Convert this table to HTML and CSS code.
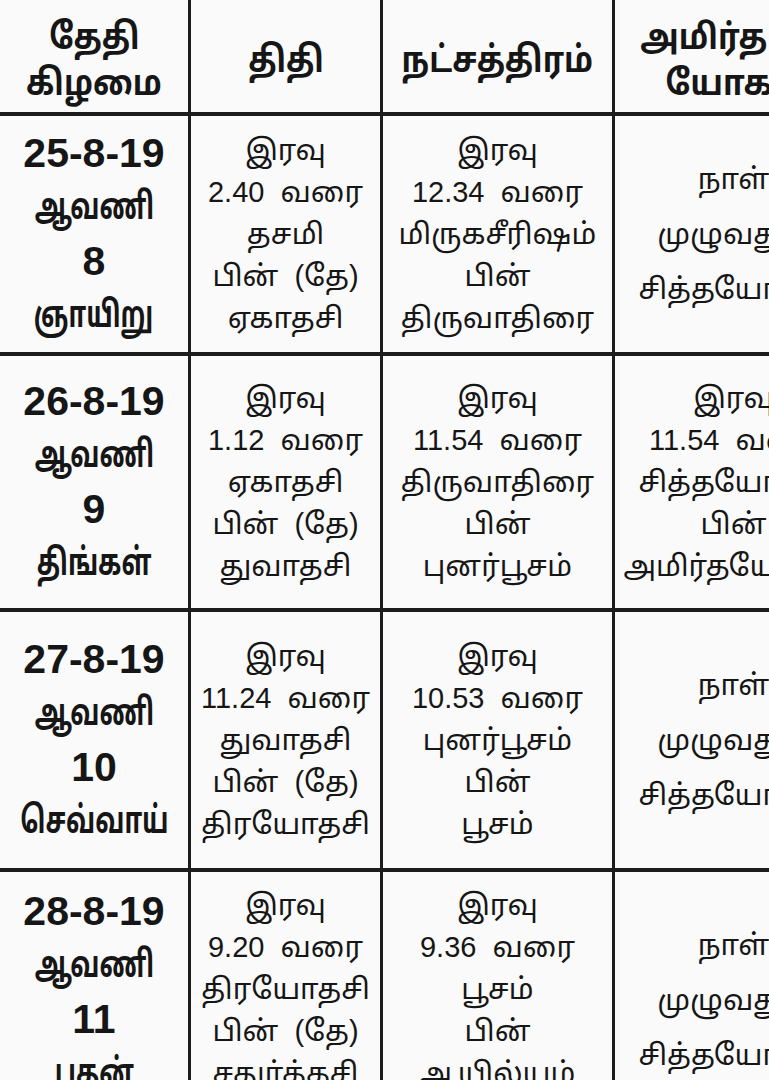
FILE: index.html
```html
<!DOCTYPE html>
<html lang="ta">
<head>
<meta charset="utf-8">
<title>பஞ்சாங்கம்</title>
<link rel="stylesheet" href="styles.css">
</head>
<body>
<div class="sheet">
  <div class="grid">
    <div class="cell head"><span class="tx">தேதி</span><span class="tx">கிழமை</span></div>
    <div class="cell head"><span class="tx">திதி</span></div>
    <div class="cell head"><span class="tx">நட்சத்திரம்</span></div>
    <div class="cell head wide"><span class="tx">அமிர்தாதி</span><span class="tx">யோகம்</span></div>

    <div class="cell date"><span class="num">25-8-19</span><span class="tx">ஆவணி</span><span class="num">8</span><span class="tx">ஞாயிறு</span></div>
    <div class="cell body"><span>இரவு</span><span>2.40&nbsp; வரை</span><span>தசமி</span><span>பின்&nbsp; (தே)</span><span>ஏகாதசி</span></div>
    <div class="cell body"><span>இரவு</span><span>12.34&nbsp; வரை</span><span>மிருகசீரிஷம்</span><span>பின்</span><span>திருவாதிரை</span></div>
    <div class="cell body spread"><span>நாள்</span><span>முழுவதும்</span><span>சித்தயோகம்</span></div>

    <div class="cell date"><span class="num">26-8-19</span><span class="tx">ஆவணி</span><span class="num">9</span><span class="tx">திங்கள்</span></div>
    <div class="cell body"><span>இரவு</span><span>1.12&nbsp; வரை</span><span>ஏகாதசி</span><span>பின்&nbsp; (தே)</span><span>துவாதசி</span></div>
    <div class="cell body"><span>இரவு</span><span>11.54&nbsp; வரை</span><span>திருவாதிரை</span><span>பின்</span><span>புனர்பூசம்</span></div>
    <div class="cell body"><span>இரவு</span><span>11.54&nbsp; வரை</span><span>சித்தயோகம்</span><span>பின்</span><span>அமிர்தயோகம்</span></div>

    <div class="cell date"><span class="num">27-8-19</span><span class="tx">ஆவணி</span><span class="num">10</span><span class="tx">செவ்வாய்</span></div>
    <div class="cell body"><span>இரவு</span><span>11.24&nbsp; வரை</span><span>துவாதசி</span><span>பின்&nbsp; (தே)</span><span>திரயோதசி</span></div>
    <div class="cell body"><span>இரவு</span><span>10.53&nbsp; வரை</span><span>புனர்பூசம்</span><span>பின்</span><span>பூசம்</span></div>
    <div class="cell body spread"><span>நாள்</span><span>முழுவதும்</span><span>சித்தயோகம்</span></div>

    <div class="cell date top"><span class="num">28-8-19</span><span class="tx">ஆவணி</span><span class="num">11</span><span class="tx">புதன்</span></div>
    <div class="cell body top"><span>இரவு</span><span>9.20&nbsp; வரை</span><span>திரயோதசி</span><span>பின்&nbsp; (தே)</span><span>சதுர்த்தசி</span></div>
    <div class="cell body top"><span>இரவு</span><span>9.36&nbsp; வரை</span><span>பூசம்</span><span>பின்</span><span>ஆயில்யம்</span></div>
    <div class="cell body spread top4"><span>நாள்</span><span>முழுவதும்</span><span>சித்தயோகம்</span></div>
  </div>
</div>
</body>
</html>
```
FILE: styles.css
```css
html, body {
  margin: 0;
  padding: 0;
  background: #fafafa;
}
body {
  width: 769px;
  height: 1080px;
  overflow: hidden;
}
.sheet {
  width: 769px;
  height: 1080px;
  overflow: hidden;
}
.grid {
  display: grid;
  grid-template-columns: 191px 192px 232px 240px;
  grid-template-rows: 116px 240px 256px 260px 260px;
  width: 855px;
  color: #161616;
  font-family: "Liberation Sans", "Noto Sans Tamil", "Lohit Tamil", "FreeSans", sans-serif;
}
.cell {
  box-sizing: border-box;
  border-right: 3px solid #1c1c1c;
  border-bottom: 4px solid #1c1c1c;
  display: flex;
  flex-direction: column;
  align-items: center;
  justify-content: center;
  text-align: center;
  white-space: nowrap;
}
.head {
  font-weight: bold;
  font-size: 36px;
  line-height: 46px;
  padding-top: 8px;
}
.head .tx {
  transform: scaleX(0.86);
}
.head.wide {
  font-size: 35px;
}
.head.wide .tx {
  transform: scaleX(0.9);
}
.date {
  font-weight: bold;
  font-size: 32px;
  line-height: 54px;
}
.date .tx {
  font-size: 37px;
  transform: scaleX(0.69);
}
.date .num {
  font-size: 41px;
}
.body {
  font-size: 29px;
  line-height: 42px;
}
.spread {
  line-height: 55px;
}
.top {
  justify-content: flex-start;
  padding-top: 12px;
}
.top4 {
  justify-content: flex-start;
  padding-top: 46px;
}
```
